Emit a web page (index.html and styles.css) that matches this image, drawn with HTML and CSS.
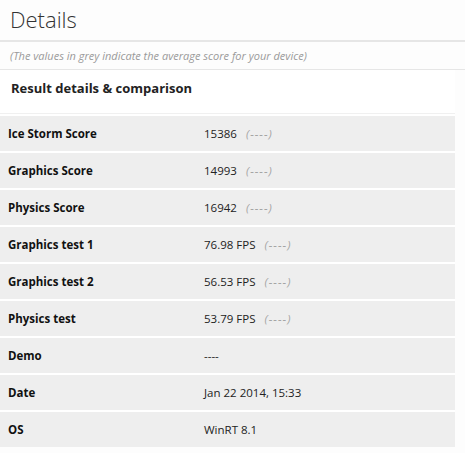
FILE: index.html
```html
<!DOCTYPE html>
<html>
<head>
<meta charset="utf-8">
<link rel="stylesheet" href="styles.css">
</head>
<body>
<div class="page">
  <div class="header"><h1 class="title">Details</h1></div>
  <div class="note">(The values in grey indicate the average score for your device)</div>
  <div class="section">
    <h2 class="section-title">Result details &amp; comparison</h2>
    <div class="table">
      <div class="row"><span class="label">Ice Storm Score</span><span class="value">15386<span class="avg">(----)</span></span></div>
      <div class="row"><span class="label">Graphics Score</span><span class="value">14993<span class="avg">(----)</span></span></div>
      <div class="row"><span class="label">Physics Score</span><span class="value">16942<span class="avg">(----)</span></span></div>
      <div class="row"><span class="label">Graphics test 1</span><span class="value">76.98 FPS<span class="avg">(----)</span></span></div>
      <div class="row"><span class="label">Graphics test 2</span><span class="value">56.53 FPS<span class="avg">(----)</span></span></div>
      <div class="row"><span class="label">Physics test</span><span class="value">53.79 FPS<span class="avg">(----)</span></span></div>
      <div class="row"><span class="label">Demo</span><span class="value">----</span></div>
      <div class="row"><span class="label">Date</span><span class="value">Jan 22 2014, 15:33</span></div>
      <div class="row"><span class="label">OS</span><span class="value">WinRT 8.1</span></div>
    </div>
  </div>
</div>
</body>
</html>
```
FILE: styles.css
```css
html, body {
  margin: 0;
  padding: 0;
  background: #ffffff;
}
.page {
  width: 465px;
  height: 453px;
  overflow: hidden;
  font-family: "Open Sans", "Noto Sans", sans-serif;
  color: #1a1a1a;
  background: #fdfdfd;
}
.header {
  display: flex;
  align-items: center;
  padding-left: 10px;
  box-sizing: border-box;
  height: 42px;
  padding-bottom: 2px;
  border-bottom: 2px solid #e6e6e6;
}
.title {
  margin: 0;
  font-size: 22px;
  font-weight: 300;
  color: #333;
  line-height: 1;
}
.note {
  height: 27px;
  border-bottom: 1px solid #e6e6e6;
  display: flex;
  align-items: center;
  padding-left: 10px;
  font-size: 11px;
  font-style: italic;
  color: #9a9a9a;
}
.section {
  width: 455px;
  background: #fff;
}
.section-title {
  margin: 0;
  height: 44px;
  display: flex;
  align-items: center;
  padding-left: 11px;
  padding-bottom: 8px;
  font-size: 13px;
  font-weight: 700;
  color: #222;
  border-bottom: 1px solid #f0f0f0;
  box-sizing: border-box;
}
.table {
  display: flex;
  flex-direction: column;
  gap: 2px;
  padding-top: 2px;
}
.row {
  height: 35px;
  background: #eeeeee;
  display: flex;
  align-items: center;
  font-size: 11.5px;
}
.label {
  width: 196px;
  padding-left: 8px;
  font-weight: 700;
  color: #111;
}
.value {
  color: #222;
}
.avg {
  margin-left: 9px;
  font-style: italic;
  letter-spacing: 1px;
  color: #a5a5a5;
}
```
